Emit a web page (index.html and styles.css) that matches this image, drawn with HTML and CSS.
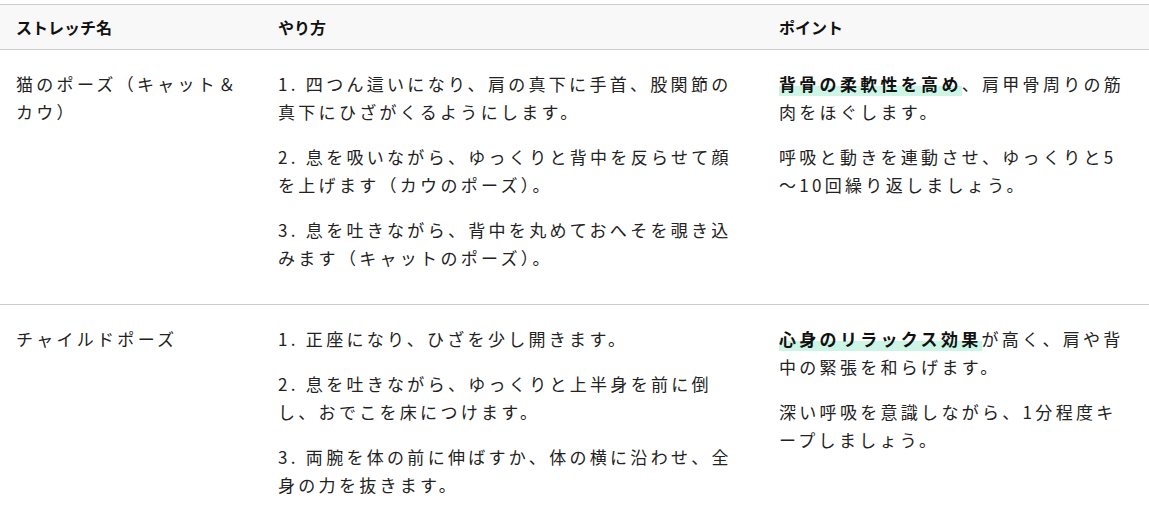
FILE: index.html
```html
<!DOCTYPE html>
<html lang="ja">
<head>
    <meta charset="UTF-8">
    <meta name="viewport" content="width=device-width, initial-scale=1.0">
    <title>ストレッチ一覧</title>
    <link rel="stylesheet" href="styles.css">
</head>
<body>
    <div class="wrap">
        <table class="stretch-table">
            <colgroup>
                <col class="col-name">
                <col class="col-how">
                <col class="col-point">
            </colgroup>
            <thead>
                <tr>
                    <th>ストレッチ名</th>
                    <th>やり方</th>
                    <th>ポイント</th>
                </tr>
            </thead>
            <tbody>
                <tr>
                    <td><p>猫のポーズ（キャット＆カウ）</p></td>
                    <td>
                        <p>1. 四つん這いになり、肩の真下に手首、股関節の真下にひざがくるようにします。</p>
                        <p>2. 息を吸いながら、ゆっくりと背中を反らせて顔を上げます（カウのポーズ）。</p>
                        <p>3. 息を吐きながら、背中を丸めておへそを覗き込みます（キャットのポーズ）。</p>
                    </td>
                    <td>
                        <p><strong class="mark">背骨の柔軟性を高め</strong>、肩甲骨周りの筋肉をほぐします。</p>
                        <p>呼吸と動きを連動させ、ゆっくりと5～10回繰り返しましょう。</p>
                    </td>
                </tr>
                <tr>
                    <td><p>チャイルドポーズ</p></td>
                    <td>
                        <p>1. 正座になり、ひざを少し開きます。</p>
                        <p>2. 息を吐きながら、ゆっくりと上半身を前に倒し、おでこを床につけます。</p>
                        <p>3. 両腕を体の前に伸ばすか、体の横に沿わせ、全身の力を抜きます。</p>
                    </td>
                    <td>
                        <p><strong class="mark">心身のリラックス効果</strong>が高く、肩や背中の緊張を和らげます。</p>
                        <p>深い呼吸を意識しながら、1分程度キープしましょう。</p>
                    </td>
                </tr>
            </tbody>
        </table>
    </div>
</body>
</html>
```

FILE: styles.css
```css
body { margin: 0; font-family: "Noto Sans CJK JP", "Noto Sans", sans-serif; color: #222; background: #fff; }
.wrap { padding-top: 4px; }
.stretch-table { width: 100%; border-collapse: collapse; table-layout: fixed; font-size: 17px; line-height: 28px; letter-spacing: 3.3px; }
.col-name { width: 262px; }
.col-how { width: 501px; }
.stretch-table th { text-align: left; padding: 8px 16px; font-size: 16px; letter-spacing: 0; font-weight: bold; color: #111; background: #f8f8f8; border-top: 1px solid #ccc; border-bottom: 1px solid #ccc; }
.stretch-table td { vertical-align: top; padding: 20px 16px 15px; border-bottom: 1px solid #ccc; }
.stretch-table p { margin: 0 0 17px; }
.mark { color: #111; background: linear-gradient(transparent 62%, #cdf5e6 62%); }
```
